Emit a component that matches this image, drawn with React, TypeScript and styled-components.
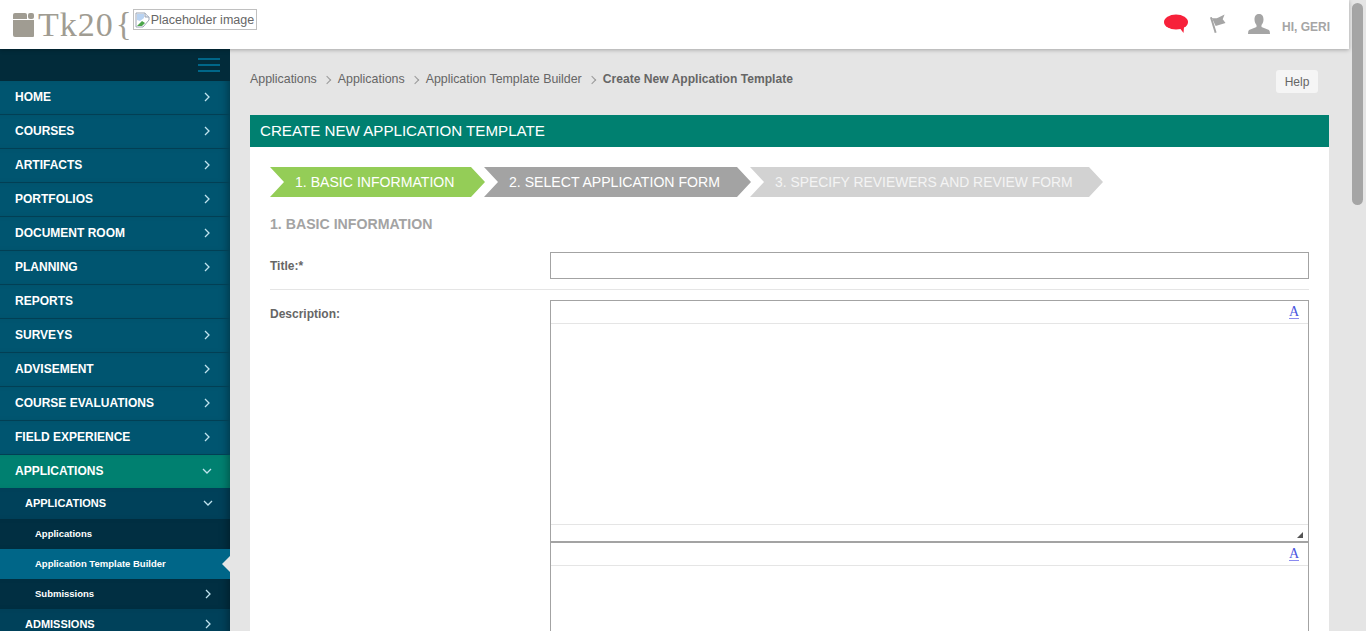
import styled, { createGlobalStyle } from "styled-components";

const GlobalStyle = createGlobalStyle`
  html, body {
    margin: 0;
    height: 100%;
    overflow: hidden;
    background: #e5e5e5;
    font-family: "Liberation Sans", Arial, sans-serif;
  }
`;

const topItems = [
  { label: "HOME", arrow: true },
  { label: "COURSES", arrow: true },
  { label: "ARTIFACTS", arrow: true },
  { label: "PORTFOLIOS", arrow: true },
  { label: "DOCUMENT ROOM", arrow: true },
  { label: "PLANNING", arrow: true },
  { label: "REPORTS", arrow: false },
  { label: "SURVEYS", arrow: true },
  { label: "ADVISEMENT", arrow: true },
  { label: "COURSE EVALUATIONS", arrow: true },
  { label: "FIELD EXPERIENCE", arrow: true },
];

const Chevron = ({ open, size = 10 }: { open?: boolean; size?: number }) => (
  <svg width={size} height={size} viewBox="0 0 10 10" fill="none">
    <polyline
      points={open ? "1,3 5,7 9,3" : "3,1 7,5 3,9"}
      stroke="#bfe3ee"
      strokeWidth="1.3"
    />
  </svg>
);

const App = () => {
  return (
    <>
      <GlobalStyle />
      <Shell>
        <Page>
          <Header>
            <Brand>
              <svg width="21" height="26" viewBox="0 0 21 26">
                <path d="M0 3 Q0 1 2 1 H12 Q14 1 14 3 V7 H0 Z" fill="#a09c92" />
                <rect x="15" y="1" width="6" height="6" rx="2" fill="#a09c92" />
                <path d="M0 8 H21 V24 Q21 25 20 25 H2 Q0 25 0 23 Z" fill="#a09c92" />
              </svg>
              <LogoText>Tk20</LogoText>
              <LogoBrace>{"{"}</LogoBrace>
              <BrokenImage>
                <svg width="16" height="16" viewBox="0 0 16 16">
                  <path d="M1 1 H10 L14 5 V8 L8 15 H1 Z" fill="#fff" stroke="#9aa4b4" />
                  <path d="M2 2 H9 V6 L5 9 L2 8 Z" fill="#b9d3f2" />
                  <path d="M2 14 L7 9 L10 11 L7 14 Z" fill="#4ca64a" />
                  <path d="M10 1 V5 H14" fill="#e4e8ee" stroke="#9aa4b4" />
                </svg>
                Placeholder image
              </BrokenImage>
            </Brand>
            <HeaderTools>
              <svg width="24" height="20" viewBox="0 0 24 20">
                <ellipse cx="12" cy="8" rx="12" ry="7.5" fill="#f7213a" />
                <path d="M15 13 L20 13 L19.5 19 Z" fill="#f7213a" />
              </svg>
              <svg width="16" height="20" viewBox="0 0 17 20">
                <path d="M0 3 L2 2.500 L7 19 L5 19.500 Z" fill="#a5a5a5" />
                <path d="M2 3.500 Q6 4.500 9 3 L15.500 0 L13.500 5 L16.500 9 L6 12 Z" fill="#a5a5a5" />
              </svg>
              <svg width="22" height="20" viewBox="0 0 22 20">
                <path
                  d="M11 0 C14.500 0 15.500 2.500 15.500 5.500 C15.500 8 14.500 10 13.500 11 V13 L21 16 Q22 17 22 20 H0 Q0 17 1 16 L8.500 13 V11 C7.500 10 6.500 8 6.500 5.500 C6.500 2.500 7.500 0 11 0 Z"
                  fill="#a5a5a5"
                />
              </svg>
              <Greeting>HI, GERI</Greeting>
            </HeaderTools>
          </Header>

          <Body>
            <Sidebar>
              <SideTop>
                <Burger>
                  <span />
                  <span />
                  <span />
                </Burger>
              </SideTop>
              {topItems.map((item) => (
                <NavRow key={item.label}>
                  {item.label}
                  {item.arrow && <Chevron />}
                </NavRow>
              ))}
              <NavRow $active>
                APPLICATIONS
                <Chevron open />
              </NavRow>
              <SubRow>
                APPLICATIONS
                <Chevron open />
              </SubRow>
              <LeafRow>Applications</LeafRow>
              <LeafRow $current>Application Template Builder</LeafRow>
              <LeafRow>
                Submissions
                <Chevron />
              </LeafRow>
              <SubRow>
                ADMISSIONS
                <Chevron />
              </SubRow>
            </Sidebar>

            <Main>
              <TopLine>
                <Crumbs>
                  <span>Applications</span>
                  <CrumbArrow />
                  <span>Applications</span>
                  <CrumbArrow />
                  <span>Application Template Builder</span>
                  <CrumbArrow />
                  <strong>Create New Application Template</strong>
                </Crumbs>
                <HelpButton>Help</HelpButton>
              </TopLine>

              <Panel>
                <PanelTitle>CREATE NEW APPLICATION TEMPLATE</PanelTitle>
                <PanelBody>
                  <Steps>
                    <Step $bg="#94cd57" $color="#fff" $width={215}>
                      1. BASIC INFORMATION
                    </Step>
                    <Step $bg="#a3a3a3" $color="#fff" $width={267}>
                      2. SELECT APPLICATION FORM
                    </Step>
                    <Step $bg="#d2d2d2" $color="#f4f4f4" $width={353}>
                      3. SPECIFY REVIEWERS AND REVIEW FORM
                    </Step>
                  </Steps>

                  <SectionTitle>1. BASIC INFORMATION</SectionTitle>

                  <TitleRow>
                    <FieldLabel>Title:*</FieldLabel>
                    <TextInput type="text" />
                  </TitleRow>

                  <DescriptionRow>
                    <FieldLabel>Description:</FieldLabel>
                    <Editors>
                      <Editor>
                        <EditorBar>
                          <FontLink>A</FontLink>
                        </EditorBar>
                        <EditorArea />
                        <EditorFoot>
                          <Grip />
                        </EditorFoot>
                      </Editor>
                      <Editor>
                        <EditorBar>
                          <FontLink>A</FontLink>
                        </EditorBar>
                        <EditorArea />
                      </Editor>
                    </Editors>
                  </DescriptionRow>
                </PanelBody>
              </Panel>
            </Main>
          </Body>
        </Page>
        <ScrollTrack>
          <ScrollThumb />
        </ScrollTrack>
      </Shell>
    </>
  );
};

export default App;

const Shell = styled.div`
  display: flex;
  height: 631px;
  overflow: hidden;
`;

const Page = styled.div`
  flex: 1;
  min-width: 0;
  display: flex;
  flex-direction: column;
`;

const Header = styled.header`
  position: relative;
  z-index: 2;
  flex: none;
  height: 49px;
  background: #fff;
  box-shadow: 0 1px 4px rgba(0, 0, 0, 0.28);
  display: flex;
  align-items: center;
  justify-content: space-between;
  padding: 0 19px 0 13px;
`;

const Brand = styled.div`
  display: flex;
  align-items: center;
  color: #a09c92;
`;

const LogoText = styled.span`
  font-family: "Liberation Serif", serif;
  font-size: 34px;
  line-height: 49px;
  margin-left: 4px;
  letter-spacing: 1px;
  color: #a09c92;
`;

const LogoBrace = styled.span`
  font-family: "Liberation Serif", serif;
  font-size: 33px;
  font-weight: normal;
  line-height: 49px;
  margin-left: 2px;
  color: #a09c92;
`;

const BrokenImage = styled.div`
  display: flex;
  align-items: center;
  box-sizing: border-box;
  height: 21px;
  margin: -10px 0 0 1px;
  padding: 0 2px 0 1px;
  border: 1px solid #c0c0c0;
  font-size: 12.500px;
  color: #666;
`;

const HeaderTools = styled.div`
  display: flex;
  align-items: center;
  gap: 22px;
  padding-bottom: 1px;
`;

const Greeting = styled.span`
  font-size: 12px;
  font-weight: bold;
  color: #a5a5a5;
  margin: 5px 0 0 -10px;
`;

const Body = styled.div`
  flex: 1;
  min-height: 0;
  display: flex;
`;

const Sidebar = styled.nav`
  flex: none;
  width: 230px;
  background: #012c3c;
  overflow: hidden;
`;

const SideTop = styled.div`
  height: 32px;
  display: flex;
  justify-content: flex-end;
  align-items: center;
  padding-right: 10px;
  background: #022b3a;
`;

const Burger = styled.div`
  width: 22px;
  display: flex;
  flex-direction: column;
  gap: 4px;
  span {
    height: 2px;
    background: #006688;
  }
`;

const edgeShade = "inset -8px 0 8px -6px rgba(0, 0, 0, 0.35)";

const NavRow = styled.div<{ $active?: boolean }>`
  box-sizing: border-box;
  height: ${(p) => (p.$active ? "33px" : "34px")};
  padding: 0 18px 2px 15px;
  border-bottom: ${(p) => (p.$active ? "0" : "1px solid #023f54")};
  display: flex;
  align-items: center;
  justify-content: space-between;
  font-size: 12px;
  font-weight: bold;
  color: #fff;
  background: ${(p) => (p.$active ? "#008070" : "#005570")};
  box-shadow: ${edgeShade};
`;

const SubRow = styled.div`
  box-sizing: border-box;
  height: 31px;
  display: flex;
  align-items: center;
  justify-content: space-between;
  padding: 0 17px 1px 25px;
  font-size: 11px;
  font-weight: bold;
  color: #fff;
  background: #00415a;
  box-shadow: ${edgeShade};
`;

const LeafRow = styled.div<{ $current?: boolean }>`
  position: relative;
  box-sizing: border-box;
  height: 30px;
  display: flex;
  align-items: center;
  justify-content: space-between;
  padding: 0 17px 1px 35px;
  font-size: 9.5px;
  font-weight: bold;
  color: #fff;
  background: ${(p) => (p.$current ? "#006688" : "#012f42")};
  box-shadow: ${(p) => (p.$current ? "none" : edgeShade)};
  ${(p) =>
    p.$current &&
    `&::after {
      content: "";
      position: absolute;
      right: 0;
      top: 7px;
      border-style: solid;
      border-width: 8px 8px 8px 0;
      border-color: transparent #e5e5e5 transparent transparent;
    }`}
`;

const Main = styled.main`
  flex: 1;
  min-width: 0;
  padding: 0 20px;
  overflow: hidden;
`;

const TopLine = styled.div`
  height: 66px;
  display: flex;
  justify-content: space-between;
  align-items: flex-start;
`;

const Crumbs = styled.div`
  display: flex;
  align-items: center;
  gap: 7px;
  padding-top: 23px;
  font-size: 12.400px;
  color: #666;
  strong {
    font-size: 12.100px;
    color: #666;
  }
`;

const CrumbArrow = styled.i`
  width: 5px;
  height: 5px;
  margin: 1px 1px 0 0;
  border-top: 1px solid #999;
  border-right: 1px solid #999;
  transform: rotate(45deg);
`;

const HelpButton = styled.button`
  height: 23px;
  width: 42px;
  margin: 21px 11px 0 0;
  padding: 0;
  border: 0;
  border-radius: 3px;
  background: #f5f5f5;
  font-family: inherit;
  font-size: 12px;
  color: #666;
`;

const Panel = styled.section`
  background: #fff;
  min-height: 600px;
`;

const PanelTitle = styled.h1`
  margin: 0;
  height: 32px;
  line-height: 31px;
  padding-left: 10px;
  background: #008070;
  color: #fff;
  font-size: 15.150px;
  font-weight: normal;
`;

const PanelBody = styled.div`
  padding: 20px 20px 0;
`;

const Steps = styled.div`
  display: flex;
  height: 30px;
`;

const Step = styled.div<{ $bg: string; $color: string; $width: number }>`
  width: ${(p) => p.$width}px;
  margin-right: -1px;
  padding-left: 25px;
  box-sizing: border-box;
  display: flex;
  align-items: center;
  background: ${(p) => p.$bg};
  color: ${(p) => p.$color};
  font-size: 14.100px;
  clip-path: polygon(
    0 0,
    calc(100% - 14px) 0,
    100% 50%,
    calc(100% - 14px) 100%,
    0 100%,
    14px 50%
  );
  &:last-child {
    font-size: 13.900px;
  }
`;

const SectionTitle = styled.h2`
  margin: 19px 0 0;
  font-size: 14.150px;
  line-height: 16px;
  font-weight: bold;
  color: #a3a3a3;
`;

const TitleRow = styled.div`
  display: flex;
  margin-top: 20px;
  padding-bottom: 10px;
  border-bottom: 1px solid #e5e5e5;
`;

const FieldLabel = styled.label`
  flex: none;
  width: 280px;
  font-size: 12px;
  font-weight: bold;
  color: #666;
  padding-top: 7px;
`;

const TextInput = styled.input`
  flex: 1;
  min-width: 0;
  height: 27px;
  box-sizing: border-box;
  border: 1px solid #a3a3a3;
  background: #fff;
  padding: 0 6px;
`;

const DescriptionRow = styled.div`
  display: flex;
  margin-top: 10px;
`;

const Editors = styled.div`
  flex: 1;
  min-width: 0;
`;

const Editor = styled.div`
  border: 1px solid #a3a3a3;
  & + & {
    margin-top: -1px;
    border-top-width: 2px;
  }
`;

const EditorBar = styled.div`
  height: 22px;
  border-bottom: 1px solid #e5e5e5;
  display: flex;
  justify-content: flex-end;
  padding-right: 9px;
`;

const FontLink = styled.span`
  font-family: "Liberation Serif", serif;
  font-size: 14px;
  color: #4a55e0;
  border-bottom: 1px solid #8a8af0;
  height: 16px;
  margin-top: 1px;
  line-height: 19px;
`;

const EditorArea = styled.div`
  height: 200px;
`;

const EditorFoot = styled.div`
  position: relative;
  height: 16px;
  border-top: 1px solid #e5e5e5;
`;

const Grip = styled.i`
  position: absolute;
  right: 5px;
  bottom: 3px;
  border-style: solid;
  border-width: 0 0 6px 6px;
  border-color: transparent transparent #555 transparent;
`;

const ScrollTrack = styled.div`
  flex: none;
  width: 17px;
  background: #e5e5e5;
  padding: 3px 3px 0;
  box-sizing: border-box;
`;

const ScrollThumb = styled.div`
  height: 202px;
  border-radius: 6px;
  background: #a5a5a5;
`;
